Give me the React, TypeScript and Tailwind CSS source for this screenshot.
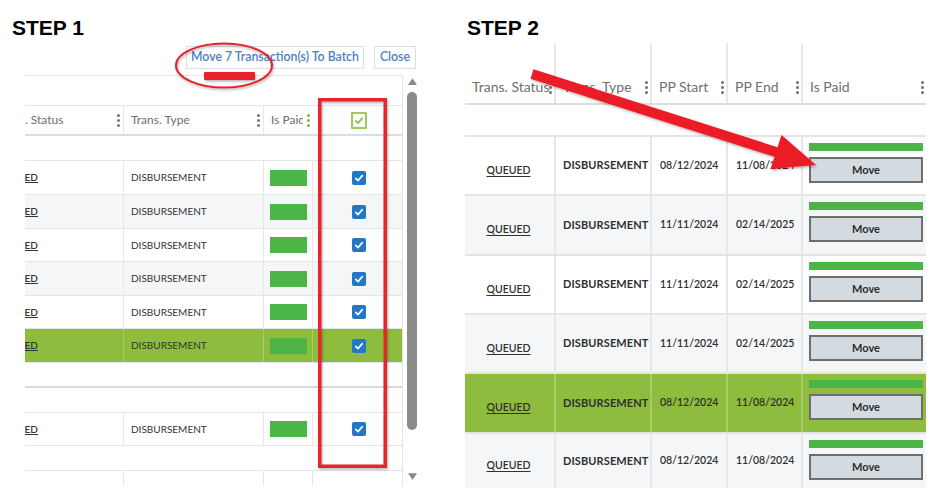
import React from 'react';

const font = { fontFamily: 'Lato, "Open Sans", sans-serif' };

function Dots({ tone }: { tone: string }) {
  return (
    <span className="flex flex-col gap-[2px] shrink-0">
      <i className={`block w-[3px] h-[3px] rounded-full ${tone}`} />
      <i className={`block w-[3px] h-[3px] rounded-full ${tone}`} />
      <i className={`block w-[3px] h-[3px] rounded-full ${tone}`} />
    </span>
  );
}

function Check({ className }: { className: string }) {
  return (
    <svg viewBox="0 0 14 14" className={className}>
      <polyline points="3.2,7.4 6,10 10.8,4.2" fill="none" stroke="currentColor" strokeWidth="2" strokeLinecap="round" strokeLinejoin="round" />
    </svg>
  );
}

function BlueBox() {
  return (
    <span className="flex items-center justify-center w-[14px] h-[14px] rounded-[2px] bg-[#2277c6] text-white">
      <Check className="w-[12px] h-[12px]" />
    </span>
  );
}

type LeftRow =
  | { kind: 'empty'; h: string; border: string }
  | { kind: 'data'; h: string; bg: string; green?: boolean }
  | { kind: 'stub'; h: string };

const leftRows: LeftRow[] = [
  { kind: 'empty', h: 'h-[25px]', border: 'border-b border-[#e4e5e7]' },
  { kind: 'data', h: 'h-[34px]', bg: 'bg-white' },
  { kind: 'data', h: 'h-[34px]', bg: 'bg-[#f5f6f8]' },
  { kind: 'data', h: 'h-[33px]', bg: 'bg-white' },
  { kind: 'data', h: 'h-[34px]', bg: 'bg-[#f5f6f8]' },
  { kind: 'data', h: 'h-[33px]', bg: 'bg-white' },
  { kind: 'data', h: 'h-[34px]', bg: 'bg-[#8dbc3e]', green: true },
  { kind: 'empty', h: 'h-[25px]', border: 'border-b-2 border-[#d9dadc]' },
  { kind: 'empty', h: 'h-[25px]', border: 'border-b border-[#e4e5e7]' },
  { kind: 'data', h: 'h-[33px]', bg: 'bg-white' },
  { kind: 'empty', h: 'h-[25px]', border: 'border-b border-[#e4e5e7]' },
  { kind: 'stub', h: 'h-[15px]' },
];

function StepOne() {
  return (
    <div className="w-[465px] shrink-0 pt-[16px]">
      <div className="pl-[12px] h-[24px] leading-6 text-[21px] font-bold text-black" style={{ fontFamily: '"Liberation Sans", Arial, sans-serif' }}>
        STEP 1
      </div>
      <div className="mt-[6px] flex justify-end gap-[10px] pr-[49px]" style={font}>
        <button className="h-[23px] px-[4px] border border-[#dcdfe3] bg-white text-[12.3px] font-semibold text-[#4a80c4] whitespace-nowrap">
          Move 7 Transaction(s) To Batch
        </button>
        <button className="h-[23px] px-[5px] border border-[#dcdfe3] bg-white text-[12.3px] font-semibold text-[#4a80c4]">
          Close
        </button>
      </div>
      <div className="mt-[6px] ml-[25px] flex" style={font}>
        <div className="w-[378px] overflow-hidden border-t border-r border-[#e4e5e7]">
          <div className="w-[417px] -ml-[39px]">
            <div className="h-[30px] border-b border-[#e4e5e7]" />
            <div className="h-[30px] grid grid-cols-[138px_140px_49px_90px] border-b-2 border-[#dcdddf] text-[12px] text-[#6f6f6f]">
              <div className="flex items-center justify-between pl-[11px] pr-[3px] border-r border-[#e6e7e9]">
                <span>Trans. Status</span>
                <Dots tone="bg-[#777]" />
              </div>
              <div className="flex items-center justify-between pl-[7px] pr-[3px] border-r border-[#e6e7e9]">
                <span>Trans. Type</span>
                <Dots tone="bg-[#777]" />
              </div>
              <div className="flex items-center justify-between pl-[7px] pr-[3px] overflow-hidden">
                <span className="block w-[32px] whitespace-nowrap overflow-hidden">Is Paid</span>
                <Dots tone="bg-[#7cb342]" />
              </div>
              <div className="flex items-center justify-center pl-[1px]">
                <span className="flex items-center justify-center w-[16px] h-[17px] border-2 border-[#9ccb5a] rounded-[1px] text-[#86bd3e]">
                  <Check className="w-[13px] h-[13px]" />
                </span>
              </div>
            </div>
            {leftRows.map((r, i) => {
              if (r.kind === 'empty') return <div key={i} className={`${r.h} ${r.border}`} />;
              if (r.kind === 'stub')
                return (
                  <div key={i} className={`${r.h} grid grid-cols-[138px_140px_49px_90px]`}>
                    <div className="border-r border-[#e6e7e9]" />
                    <div className="border-r border-[#e6e7e9]" />
                    <div className="border-r border-[#e6e7e9]" />
                    <div />
                  </div>
                );
              const div = r.green ? 'border-[#a5cc68]' : 'border-[#e6e7e9]';
              return (
                <div key={i} className={`${r.h} ${r.bg} grid grid-cols-[138px_140px_49px_90px] border-b border-[#e4e5e7] text-[10px] text-[#333]`}>
                  <div className={`flex items-center pl-[10px] border-r ${div}`}>
                    <span className="font-semibold underline">QUEUED</span>
                  </div>
                  <div className={`flex items-center pl-[7px] border-r ${div}`}>DISBURSEMENT</div>
                  <div className={`flex items-center pl-[6px] border-r ${div}`}>
                    <span className="block w-[37px] h-[16px] bg-[#4bb548]" />
                  </div>
                  <div className="flex items-center justify-center pl-[1px]">
                    <BlueBox />
                  </div>
                </div>
              );
            })}
          </div>
        </div>
        <div className="w-[17px] h-[410px] flex flex-col items-center">
          <svg viewBox="0 0 8 6" className="mt-[3px] w-[9px] h-[7px] ml-[1px]">
            <polygon points="4,0 8,6 0,6" fill="#8a8a8a" />
          </svg>
          <div className="mt-[7px] w-[10px] h-[338px] rounded-full bg-[#8b8b8b] ml-[1px]" />
          <svg viewBox="0 0 8 6" className="mt-[43px] w-[9px] h-[7px] ml-[1px]">
            <polygon points="0,0 8,0 4,6" fill="#8a8a8a" />
          </svg>
        </div>
      </div>
    </div>
  );
}

const rightRows = [
  { start: '08/12/2024', end: '11/08/2024', bg: 'bg-white', h: 'h-[59px]' },
  { start: '11/11/2024', end: '02/14/2025', bg: 'bg-[#f5f6f8]', h: 'h-[60px]' },
  { start: '11/11/2024', end: '02/14/2025', bg: 'bg-white', h: 'h-[59px]' },
  { start: '11/11/2024', end: '02/14/2025', bg: 'bg-[#f5f6f8]', h: 'h-[59px]' },
  { start: '08/12/2024', end: '11/08/2024', bg: 'bg-[#8dbc3e]', h: 'h-[60px]', green: true },
  { start: '08/12/2024', end: '11/08/2024', bg: 'bg-[#f5f6f8]', h: 'h-[54px]', last: true },
];

const headers = ['Trans. Status', 'Trans. Type', 'PP Start', 'PP End', 'Is Paid'];

function StepTwo() {
  return (
    <div className="flex-1 pt-[16px]">
      <div className="pl-[2px] h-[24px] leading-6 text-[21px] font-bold text-black" style={{ fontFamily: '"Liberation Sans", Arial, sans-serif' }}>
        STEP 2
      </div>
      <div className="mt-[3px] w-[461px]" style={font}>
        <div className="h-[62px] grid grid-cols-[91px_96px_76px_75px_123px] border-b-2 border-[#dcdddf] text-[14px] text-[#6f6f6f]">
          {headers.map((h, i) => (
            <div key={h} className={`flex items-end justify-between pb-[8px] pl-[7px] pr-[2px] ${i < 4 ? 'border-r-2 border-[#e6e7e9]' : ''}`}>
              <span className="whitespace-nowrap leading-[17px]">{h}</span>
              <span className="mb-[1px]">
                <Dots tone="bg-[#6f6f6f]" />
              </span>
            </div>
          ))}
        </div>
        <div className="h-[32px] border-b-2 border-[#e4e5e7]" />
        {rightRows.map((r, i) => {
          const div = r.green ? 'border-r-2 border-[#a5cc68]' : 'border-r-2 border-[#e6e7e9]';
          return (
            <div
              key={i}
              className={`${r.h} ${r.bg} grid grid-cols-[91px_96px_76px_75px_123px] text-[#303030] ${r.last ? '' : 'border-b-2 border-[#e4e5e7]'}`}
            >
              <div className={`flex items-center justify-center pt-[10px] pr-[2px] ${div}`}>
                <span className="text-[10.5px] font-semibold underline underline-offset-2">QUEUED</span>
              </div>
              <div className={`flex items-center pl-[7px] text-[11px] font-bold tracking-[0.1px] ${div}`}>DISBURSEMENT</div>
              <div className={`flex items-center pl-[8px] text-[10.5px] font-semibold ${div}`}>{r.start}</div>
              <div className={`flex items-center pl-[8px] text-[10.5px] font-semibold ${div}`}>{r.end}</div>
              <div className="flex flex-col pt-[6px] pl-[6px] pr-[3px] gap-[6px]">
                <span className="block h-[8px] bg-[#4bb548]" />
                <span className="flex items-center justify-center h-[26px] border-2 border-[#6e6e6e] bg-[#d3dbe1] text-[11px] font-bold text-[#2c2c2c]">
                  Move
                </span>
              </div>
            </div>
          );
        })}
      </div>
    </div>
  );
}

function Marks() {
  return (
    <svg className="absolute inset-0 w-[940px] h-[502px] pointer-events-none" viewBox="0 0 940 502">
      <defs>
        <filter id="sh" x="-10%" y="-10%" width="130%" height="130%">
          <feDropShadow dx="1" dy="1.5" stdDeviation="1" floodColor="#000" floodOpacity="0.3" />
        </filter>
      </defs>
      <g filter="url(#sh)">
        <ellipse cx="224" cy="65.5" rx="48" ry="22" fill="none" stroke="#e0262c" strokeWidth="2" />
        <rect x="204" y="72" width="51" height="8" rx="1" fill="#e8232a" />
        <rect x="319.75" y="99.75" width="65.5" height="366.5" fill="none" stroke="#e8262b" strokeWidth="3.5" />
        <polygon
          points="533.5,69.2 777.5,147.2 781.5,134.9 816,165 770.5,169.1 774.5,156.8 530.5,78.8"
          fill="#ec1f27"
        />
      </g>
    </svg>
  );
}

export default function App() {
  return (
    <div className="relative w-[940px] h-[502px] bg-white overflow-hidden flex">
      <StepOne />
      <StepTwo />
      <Marks />
    </div>
  );
}
